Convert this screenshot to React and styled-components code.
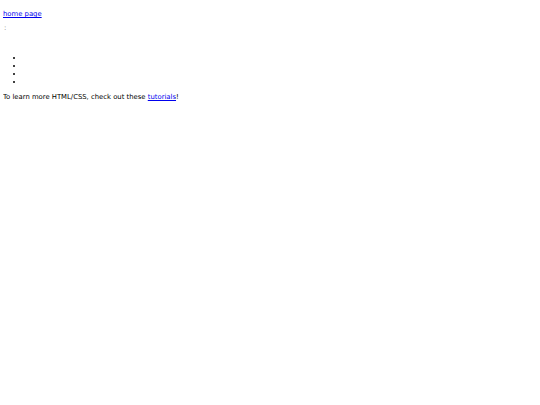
import React from "react";
import styled, { createGlobalStyle } from "styled-components";

const GlobalStyle = createGlobalStyle`
  body {
    margin: 3px;
    background: #fff;
    color: #000;
    font-family: "DejaVu Sans", Verdana, sans-serif;
    font-size: 6.85px;
  }
`;

const Page = styled.div`
  display: flex;
  flex-direction: column;
  padding-top: 6px;
`;

const HomeLink = styled.a`
  align-self: flex-start;
  color: #0000ee;
  text-decoration: underline;
  line-height: 10px;
`;

const Meta = styled.div`
  margin-top: 4px;
  padding-left: 1px;
  color: #777;
  font-size: 7px;
  line-height: 10px;
`;

const List = styled.ul`
  margin: 21px 0 0;
  padding-left: 21px;
  list-style: disc outside;
`;

const Item = styled.li`
  height: 8px;
  &::before {
    content: "";
  }
`;

const Note = styled.p`
  margin: 6px 0 0;
  line-height: 10px;
`;

const Link = styled.a`
  color: #0000ee;
`;

export default function App() {
  return (
    <Page>
      <GlobalStyle />
      <HomeLink href="#">home page</HomeLink>
      <Meta>:</Meta>
      <List>
        <Item />
        <Item />
        <Item />
        <Item />
      </List>
      <Note>
        To learn more HTML/CSS, check out these <Link href="#">tutorials</Link>!
      </Note>
    </Page>
  );
}
